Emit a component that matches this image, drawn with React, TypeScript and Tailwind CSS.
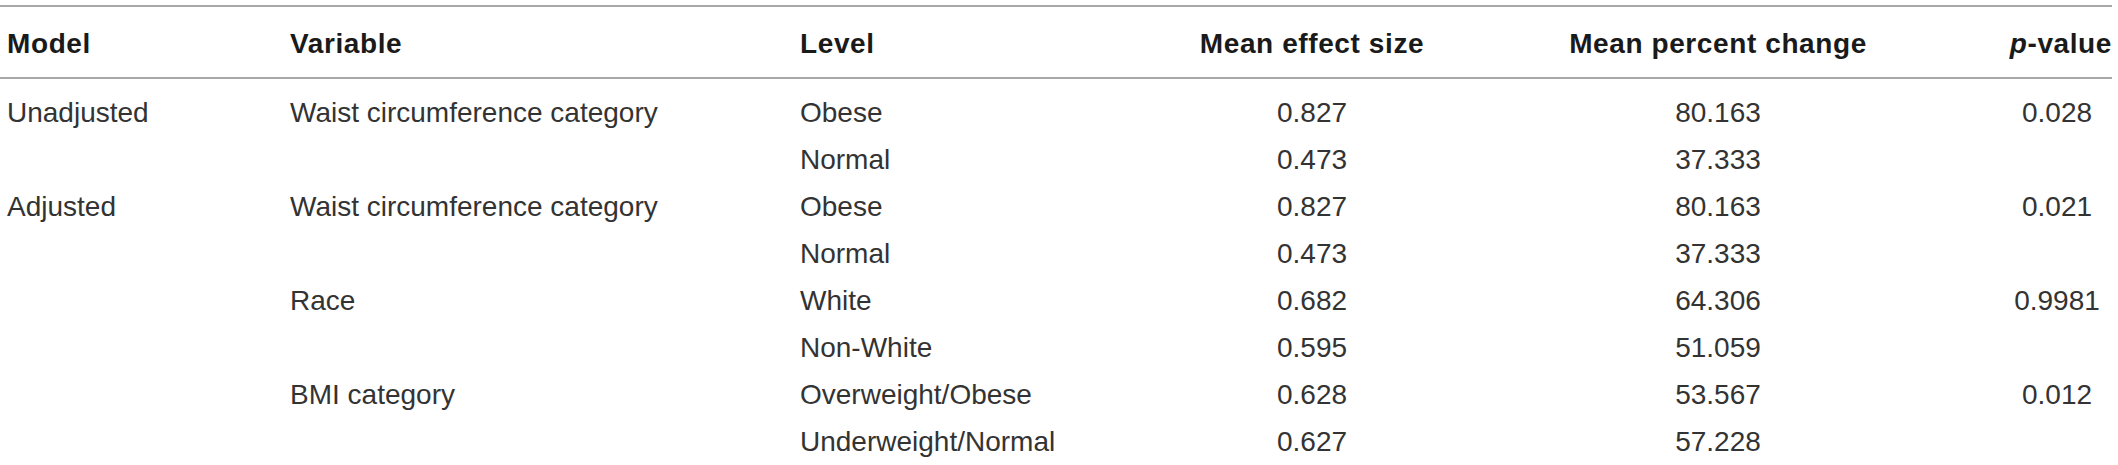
import React from 'react';

type Row = {
  model?: string;
  variable?: string;
  level: string;
  effect: string;
  change: string;
  p?: string;
};

const rows: Row[] = [
  { model: 'Unadjusted', variable: 'Waist circumference category', level: 'Obese', effect: '0.827', change: '80.163', p: '0.028' },
  { level: 'Normal', effect: '0.473', change: '37.333' },
  { model: 'Adjusted', variable: 'Waist circumference category', level: 'Obese', effect: '0.827', change: '80.163', p: '0.021' },
  { level: 'Normal', effect: '0.473', change: '37.333' },
  { variable: 'Race', level: 'White', effect: '0.682', change: '64.306', p: '0.9981' },
  { level: 'Non-White', effect: '0.595', change: '51.059' },
  { variable: 'BMI category', level: 'Overweight/Obese', effect: '0.628', change: '53.567', p: '0.012' },
  { level: 'Underweight/Normal', effect: '0.627', change: '57.228' },
];

const grid = 'grid grid-cols-[283px_510px_331px_376px_436px_1fr] items-center';

export default function App() {
  return (
    <div className="w-[2118px] h-[465px] bg-white overflow-hidden font-['Liberation_Sans',Arial,sans-serif] text-[28px]">
      <div className="pt-[5px] pr-[6px]">
        <div className="border-t-2 border-[#a8a8a8]" />
        <div className={`${grid} h-[70px] pt-[3px] font-bold text-[#1a1a1a] tracking-[0.6px]`}>
          <div className="pl-[7px]">Model</div>
          <div className="pl-[7px]">Variable</div>
          <div className="pl-[7px]">Level</div>
          <div className="text-center">Mean effect size</div>
          <div className="text-center">Mean percent change</div>
          <div className="text-right">
            <span className="italic">p</span>-value
          </div>
        </div>
        <div className="border-t-2 border-[#a8a8a8]" />
      </div>
      <div className="pt-[10px] text-[#333333]">
        {rows.map((r, i) => (
          <div key={i} className={`${grid} h-[47px]`}>
            <div className="pl-[7px]">{r.model}</div>
            <div className="pl-[7px]">{r.variable}</div>
            <div className="pl-[7px]">{r.level}</div>
            <div className="text-center">{r.effect}</div>
            <div className="text-center">{r.change}</div>
            <div className="pl-[66px] pr-[6px] text-center">{r.p}</div>
          </div>
        ))}
      </div>
    </div>
  );
}
